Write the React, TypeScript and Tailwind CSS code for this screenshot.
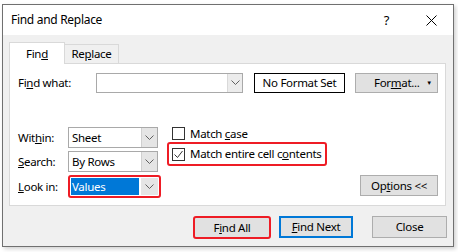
import React from "react";

const Chevron = () => (
  <svg width="9" height="6" viewBox="0 0 9 6" fill="none">
    <path d="M0.5 0.5 L4.5 4.5 L8.5 0.5" stroke="#606060" strokeWidth="1" />
  </svg>
);

const Dropdown = ({ value, w }: { value: string; w: string }) => (
  <div className={`${w} h-[21px] border border-[#a9a9a9] bg-white flex items-stretch`}>
    <div className="flex-1 pl-[3px] flex items-center">{value}</div>
    <div className="w-[16px] bg-[#e5e5e5] border-l border-[#d0d0d0] flex items-center justify-center">
      <Chevron />
    </div>
  </div>
);

const Checkbox = ({ checked }: { checked?: boolean }) => (
  <div className="w-[13px] h-[13px] border border-[#333333] bg-white flex items-center justify-center shrink-0">
    {checked && (
      <svg width="11" height="11" viewBox="0 0 11 11" fill="none">
        <path d="M1.5 5.5 L4.5 8.5 L9.5 2" stroke="#333333" strokeWidth="1" />
      </svg>
    )}
  </div>
);

export default function App() {
  return (
    <div className="w-[458px] h-[252px] bg-white pt-[4px] pl-[2px] font-['Noto_Sans',sans-serif] text-[11.5px] tracking-[-0.3px] text-black leading-none whitespace-nowrap">
      <div className="w-[452px] h-[243px] border border-[#707070] bg-[#f0f0f0] shadow-[2px_2px_4px_rgba(0,0,0,0.18)] flex flex-col">
        {/* Title bar */}
        <div className="h-[30px] bg-white flex items-center pl-[8px] pr-[16px] shrink-0">
          <span className="text-[12px]">Find and Replace</span>
          <span className="ml-auto text-[13px]">?</span>
          <svg className="ml-[37px]" width="11" height="11" viewBox="0 0 11 11">
            <path d="M0.5 0.5 L10.5 10.5 M10.5 0.5 L0.5 10.5" stroke="#000" strokeWidth="1" />
          </svg>
        </div>

        {/* Body */}
        <div className="flex-1 px-[6px] pt-[7px] flex flex-col">
          {/* Tabs */}
          <div className="flex items-end h-[21px]">
            <div className="w-[56px] h-[22px] bg-white border border-[#d9d9d9] border-b-0 relative z-10 -mb-px flex items-center justify-center">
              Fin<u>d</u>
            </div>
            <div className="w-[54px] h-[19px] bg-[#f0f0f0] border border-[#d9d9d9] border-l-0 border-b-0 flex items-center justify-center">
              Re<u>p</u>lace
            </div>
          </div>

          {/* Panel */}
          <div className="w-[437px] h-[143px] bg-white border border-[#d9d9d9] pl-[8px] pr-[7px] pt-[9px] flex flex-col">
            <div className="flex items-center h-[20px]">
              <div className="w-[78px]">
                Fi<u>n</u>d what:
              </div>
              <div className="w-[147px] h-[20px] border border-[#a9a9a9] bg-white flex justify-end">
                <div className="w-[15px] bg-[#ececec] border-l border-[#d9d9d9] flex items-center justify-center">
                  <Chevron />
                </div>
              </div>
              <div className="ml-[11px] w-[91px] h-[20px] border border-black flex items-center justify-center">
                No Format Set
              </div>
              <div className="ml-[10px] w-[83px] h-[20px] border border-[#adadad] bg-[#e1e1e1] flex items-center pl-[18px]">
                <span>
                  For<u>m</u>at...
                </span>
                <span className="ml-auto mr-[5px] text-[6px]">▼</span>
              </div>
            </div>

            <div className="flex mt-[34px]">
              {/* labels + dropdowns */}
              <div className="flex flex-col gap-[3px]">
                <div className="flex items-center">
                  <div className="w-[50px]">
                    Wit<u>h</u>in:
                  </div>
                  <Dropdown value="Sheet" w="w-[90px]" />
                </div>
                <div className="flex items-center">
                  <div className="w-[50px]">
                    <u>S</u>earch:
                  </div>
                  <Dropdown value="By Rows" w="w-[90px]" />
                </div>
                <div className="flex items-center">
                  <div className="w-[50px]">
                    <u>L</u>ook in:
                  </div>
                  <div className="w-[93px] h-[23px] border-2 border-[#ee1c25] rounded-[3px] bg-white flex items-stretch p-[1px]">
                    <div className="flex-1 flex items-stretch">
                      <div className="w-[68px] bg-[#0078d7] text-white pl-[1px] flex items-center">Values</div>
                    </div>
                    <div className="w-[17px] bg-[#e5e5e5] flex items-center justify-center">
                      <Chevron />
                    </div>
                  </div>
                </div>
              </div>

              {/* checkboxes */}
              <div className="ml-[11px] flex flex-col">
                <div className="h-[13px] flex items-center gap-[5px]">
                  <Checkbox />
                  <span>
                    Match <u>c</u>ase
                  </span>
                </div>
                <div className="-ml-[5px] mt-[2px] w-[160px] h-[24px] border-2 border-[#ee1c25] rounded-[3px] pl-[3px] flex items-center gap-[5px]">
                  <Checkbox checked />
                  <span>
                    Match entire cell c<u>o</u>ntents
                  </span>
                </div>
              </div>

              <div className="ml-auto self-end mb-[2px] w-[78px] h-[21px] border border-[#adadad] bg-[#e1e1e1] flex items-center justify-center">
                Op<u>t</u>ions &lt;&lt;
              </div>
            </div>
          </div>

          {/* Bottom buttons */}
          <div className="flex justify-end mt-[10px]">
            <div className="w-[78px] h-[23px] border-2 border-[#ee1c25] rounded-[3px] bg-[#e1e1e1] flex items-center justify-center">
              F<u>i</u>nd All
            </div>
            <div className="ml-[8px] w-[74px] h-[22px] border-2 border-[#0078d7] bg-[#e1e1e1] flex items-center justify-center">
              <u>F</u>ind Next
            </div>
            <div className="ml-[19px] w-[75px] h-[22px] border border-[#adadad] bg-[#e1e1e1] flex items-center justify-center">
              Close
            </div>
          </div>
        </div>
      </div>
    </div>
  );
}
